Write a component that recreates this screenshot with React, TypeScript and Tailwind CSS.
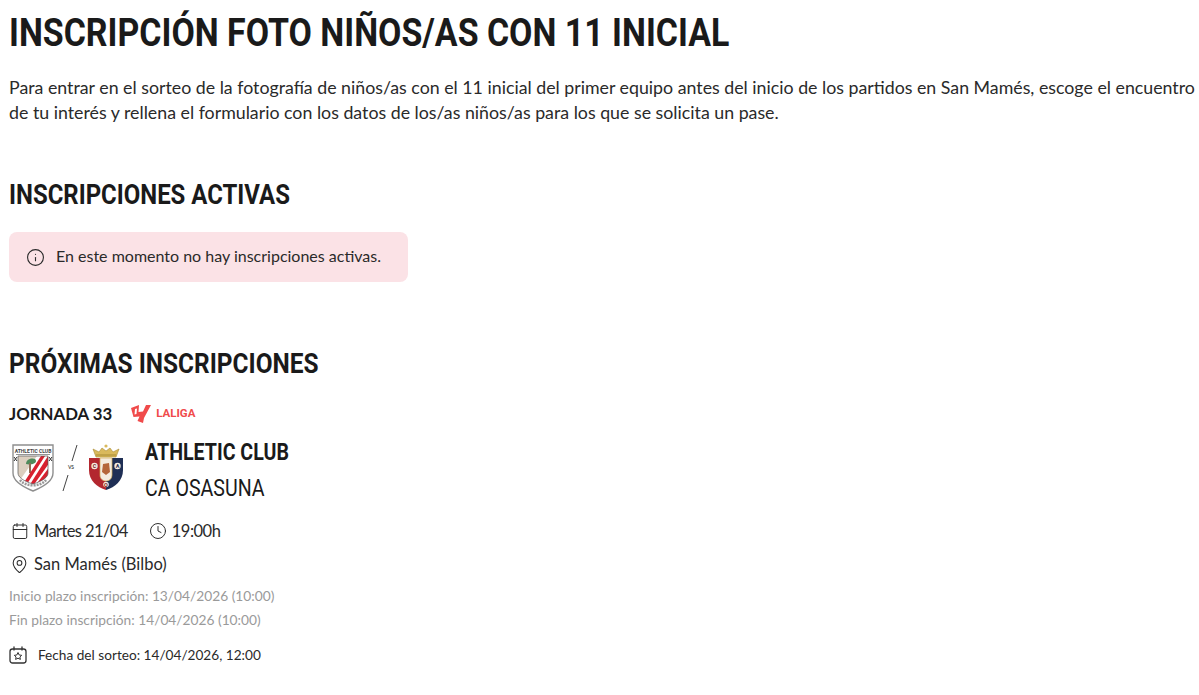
import React from 'react';
import { Calendar, Clock, Info, MapPin } from 'lucide-react';

const heading = "font-['Roboto',sans-serif] font-bold text-[#1a1a1a] origin-left whitespace-nowrap";

function Athletic() {
  return (
    <svg width="42" height="48" viewBox="0 0 42 48">
      <defs>
        <clipPath id="ath-field">
          <path d="M6 12H36V29C36 33 31 37 21 40C11 37 6 33 6 29Z" />
        </clipPath>
      </defs>
      <path d="M1 1H41V29C41 37 31 43 21 47C11 43 1 37 1 29Z" fill="#fff" stroke="#8f8f8f" strokeWidth="1.4" />
      <text x="21" y="8.5" textAnchor="middle" fontSize="5" fontWeight="700" fill="#444" fontFamily="Roboto, sans-serif">ATHLETIC CLUB</text>
      <path d="M4 10.5H38" stroke="#666" strokeWidth="0.7" />
      <g clipPath="url(#ath-field)">
        <path d="M6 12H36V42H6Z" fill="#fff" />
        <path d="M6 12H25L8 36H6Z" fill="#dccfc0" />
        <path d="M14 20C14 14 24 13 24 17C24 20 18 21 14 20Z" fill="#4f8a5b" />
        <path d="M17 19H19V29H17Z" fill="#8d6b55" />
        <path d="M29 12H33L15 40H11Z" fill="#d8202f" />
        <path d="M36 12H38V18L21 42H17Z" fill="#d8202f" />
        <path d="M38 22V30L27 42H23Z" fill="#d8202f" />
      </g>
      <path d="M6 12H36V29C36 33 31 37 21 40C11 37 6 33 6 29Z" fill="none" stroke="#555" strokeWidth="0.7" />
      <path d="M2 13L5 17M5 13L2 17M37 13L40 17M40 13L37 17" stroke="#333" strokeWidth="1" />
      <path d="M8 36C13 43 29 43 34 36" fill="none" stroke="#999" strokeWidth="2.6" strokeDasharray="2 1" />
    </svg>
  );
}

function Osasuna() {
  return (
    <svg width="36" height="47" viewBox="0 0 36 47">
      <path d="M8 13L5 5L11 8L14 4L18 7L22 4L25 8L31 5L28 13Z" fill="#d9b95c" stroke="#a88a30" strokeWidth="0.6" />
      <circle cx="18" cy="2" r="1.6" fill="#d9b95c" />
      <path d="M8 11H28" stroke="#9b7d2c" strokeWidth="0.8" />
      <path d="M1 14H18V46C9 43 1 37 1 26Z" fill="#b3272f" />
      <path d="M35 14H18V46C27 43 35 37 35 26Z" fill="#1f2f55" />
      <path d="M12 14H24V31C24 35 21 37 18 37C15 37 12 35 12 31Z" fill="#f4ece0" stroke="#d2ac55" strokeWidth="0.7" />
      <path d="M15 20L21 19L22 28L18 31L14 28Z" fill="#b5663a" />
      <circle cx="6.5" cy="22" r="3.2" fill="#f4ece0" />
      <circle cx="29.5" cy="22" r="3.2" fill="#f4ece0" />
      <circle cx="18" cy="40.5" r="2.8" fill="#f4ece0" />
      <text x="6.5" y="24" textAnchor="middle" fontSize="5.5" fontWeight="700" fill="#7c1b22" fontFamily="Roboto, sans-serif">C</text>
      <text x="29.5" y="24" textAnchor="middle" fontSize="5.5" fontWeight="700" fill="#1f2f55" fontFamily="Roboto, sans-serif">A</text>
      <text x="18" y="42.5" textAnchor="middle" fontSize="5.5" fontWeight="700" fill="#7c1b22" fontFamily="Roboto, sans-serif">O</text>
    </svg>
  );
}

function LaLigaMark() {
  return (
    <svg width="20" height="19" viewBox="0 0 20 19">
      <path d="M0 3L8 0L7.5 7L12 6.5L15 0H20L13 13L12 18L6.5 16L8.5 11.5L2.5 12Z" fill="#f04b4b" />
      <path d="M4 4L6 3.4L5.5 9L3.5 9.4Z" fill="#fff" />
    </svg>
  );
}

function CalendarStar() {
  return (
    <svg width="18" height="18" viewBox="0 0 18 18" fill="none" stroke="#333" strokeWidth="1.3">
      <rect x="1" y="3" width="16" height="14" rx="2.5" />
      <path d="M5 1V4M13 1V4" strokeLinecap="round" />
      <path d="M9 6.5L10.2 9L12.7 9.3L10.9 11L11.4 13.4L9 12.2L6.6 13.4L7.1 11L5.3 9.3L7.8 9Z" strokeWidth="1" strokeLinejoin="round" />
    </svg>
  );
}

export default function App() {
  return (
    <div className="min-h-[695px] bg-white overflow-hidden pl-[9px] pt-[8px] font-['Lato',sans-serif] text-[#2a2a2a]">
      <h1 className={`${heading} text-[39px] leading-[50px] scale-x-[0.869]`}>INSCRIPCIÓN FOTO NIÑOS/AS CON 11 INICIAL</h1>
      <p className="mt-[17px] w-[1190px] text-[17.77px] leading-[25px]">
        Para entrar en el sorteo de la fotografía de niños/as con el 11 inicial del primer equipo antes del inicio de los partidos en San Mamés, escoge el encuentro de tu interés y rellena el formulario con los datos de los/as niños/as para los que se solicita un pase.
      </p>

      <h2 className={`${heading} mt-[52px] text-[28px] leading-[36px] scale-x-[0.855]`}>INSCRIPCIONES ACTIVAS</h2>
      <div className="mt-[19px] flex h-[50px] w-[399px] items-center gap-[11px] rounded-lg bg-[#fbe2e6] pl-[17px] text-[16px]">
        <Info size={19} strokeWidth={1.4} />
        <span className="pb-[2px]">En este momento no hay inscripciones activas.</span>
      </div>

      <h2 className={`${heading} mt-[64px] text-[28px] leading-[36px] scale-x-[0.872]`}>PRÓXIMAS INSCRIPCIONES</h2>
      <div className="mt-[20px] flex h-[24px] items-center">
        <span className="text-[16.8px] font-bold text-[#1a1a1a]">JORNADA 33</span>
        <span className="ml-[19px] flex items-center gap-[5px] font-['Roboto',sans-serif] text-[11.5px] font-bold text-[#f04b4b]">
          <LaLigaMark />
          LALIGA
        </span>
      </div>

      <div className="mt-[8px] flex items-center pl-[3px]">
        <div className="mb-[5px] flex items-center">
          <Athletic />
          <div className="ml-[4px] flex h-[48px] w-[26px] flex-col items-center justify-between">
            <svg width="26" height="18" viewBox="0 0 26 18"><path d="M19 1L14 17" stroke="#444" strokeWidth="1" /></svg>
            <span className="text-[5px] font-bold leading-none text-[#555]">VS</span>
            <svg width="26" height="18" viewBox="0 0 26 18"><path d="M10 1L5 17" stroke="#444" strokeWidth="1" /></svg>
          </div>
          <div className="ml-[4px]"><Osasuna /></div>
        </div>
        <div className="ml-[21px]">
          <div className={`${heading} text-[24.5px] leading-[36px] scale-x-[0.8]`}>ATHLETIC CLUB</div>
          <div className={`${heading} text-[24.5px] leading-[36px] !font-normal scale-x-[0.8]`}>CA OSASUNA</div>
        </div>
      </div>

      <div className="mt-[13px] flex h-[24px] items-center text-[16.5px]">
        <Calendar size={18} strokeWidth={1.3} className="ml-[2px]" />
        <span className="ml-[5px] tracking-[-0.6px]">Martes 21/04</span>
        <Clock size={18} strokeWidth={1.3} className="ml-[21px]" />
        <span className="ml-[5px] tracking-[-0.5px]">19:00h</span>
      </div>
      <div className="mt-[9px] flex h-[24px] items-center text-[16.5px]">
        <MapPin size={19} strokeWidth={1.3} className="ml-[1px]" />
        <span className="ml-[5px]">San Mamés (Bilbo)</span>
      </div>
      <div className="mt-[8px] text-[13.75px] leading-[24px] text-[#9a9a9a]">
        <div>Inicio plazo inscripción: 13/04/2026 (10:00)</div>
        <div>Fin plazo inscripción: 14/04/2026 (10:00)</div>
      </div>
      <div className="mt-[11px] flex h-[24px] items-center text-[13.65px]">
        <CalendarStar />
        <span className="ml-[11px]">Fecha del sorteo: 14/04/2026, 12:00</span>
      </div>
    </div>
  );
}
